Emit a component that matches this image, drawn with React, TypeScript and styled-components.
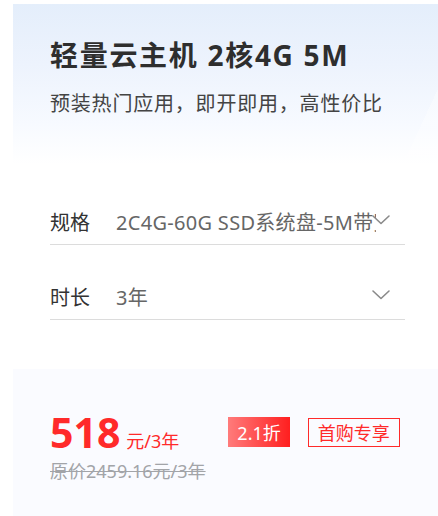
import React from "react";
import styled, { createGlobalStyle } from "styled-components";

interface SpecRow {
  label: string;
  value: string;
}

const rows: SpecRow[] = [
  { label: "规格", value: "2C4G-60G SSD系统盘-5M带宽-1200GB流量" },
  { label: "时长", value: "3年" },
];

const GlobalStyle = createGlobalStyle`
  html, body {
    margin: 0;
    padding: 0;
    background: #fff;
  }
  body {
    font-family: "Noto Sans", "Noto Sans CJK SC", sans-serif;
  }
`;

const Chevron = () => (
  <svg width="20" height="12" viewBox="0 0 20 12" fill="none">
    <path d="M2 2 L10 9.5 L18 2" stroke="#8a8a8a" strokeWidth="1.6" strokeLinecap="round" strokeLinejoin="round" />
  </svg>
);

const App: React.FC = () => {
  return (
    <>
      <GlobalStyle />
      <Card>
        <Header>
          <Title>轻量云主机 2核4G 5M</Title>
          <Subtitle>预装热门应用，即开即用，高性价比</Subtitle>
        </Header>

        <Form>
          {rows.map((row) => (
            <Row key={row.label}>
              <Label>{row.label}</Label>
              <Value>{row.value}</Value>
              <Arrow>
                <Chevron />
              </Arrow>
            </Row>
          ))}
        </Form>

        <PriceBox>
          <PriceLine>
            <Amount>
              <Big>518</Big>
              <Unit>元/3年</Unit>
            </Amount>
            <Discount>2.1折</Discount>
            <Tag>首购专享</Tag>
          </PriceLine>
          <Original>原价2459.16元/3年</Original>
        </PriceBox>
      </Card>
    </>
  );
};

const Card = styled.div`
  margin: 4px 0 0 13px;
  height: 512px;
  display: flex;
  flex-direction: column;
  background:
    linear-gradient(115deg, transparent 0 70%, rgba(255, 255, 255, 0.35) 70% 100%),
    linear-gradient(180deg, #e4eefb 0px, #edf3fd 60px, #f7faff 120px, #fff 160px);
  overflow: hidden;
`;

const Header = styled.div`
  padding: 34px 0 0 37px;
`;

const Title = styled.h1`
  margin: 0;
  font-size: 28px;
  line-height: 34px;
  font-weight: 700;
  color: #2e2e2e;
  letter-spacing: 1.7px;
`;

const Subtitle = styled.p`
  margin: 18px 0 0;
  font-size: 20px;
  line-height: 28px;
  color: #444;
  letter-spacing: 0.8px;
`;

const Form = styled.div`
  margin-top: 80px;
  padding: 0 33px 0 37px;
  display: flex;
  flex-direction: column;
  gap: 28px;
`;

const Row = styled.div`
  height: 46px;
  display: flex;
  align-items: center;
  border-bottom: 1px solid #dcdcdc;
`;

const Label = styled.span`
  width: 66px;
  flex-shrink: 0;
  font-size: 20px;
  color: #333;
`;

const Value = styled.span`
  flex: 1;
  min-width: 0;
  overflow: hidden;
  white-space: nowrap;
  font-size: 20px;
  letter-spacing: 0.3px;
  color: #666;
`;

const Arrow = styled.span`
  width: 34px;
  margin-left: -5px;
  flex-shrink: 0;
  display: flex;
  margin-top: -2px;
`;

const PriceBox = styled.div`
  margin-top: 49px;
  flex: 1;
  background: #fafbff;
  padding: 40px 0 0 37px;
`;

const PriceLine = styled.div`
  display: flex;
  align-items: center;
`;

const Amount = styled.div`
  display: flex;
  align-items: baseline;
  gap: 6px;
`;

const Big = styled.span`
  font-size: 41px;
  line-height: 46px;
  font-weight: 700;
  color: #ff2a2a;
`;

const Unit = styled.span`
  font-size: 18px;
  color: #ff2a2a;
`;

const Discount = styled.span`
  margin-left: 49px;
  height: 30px;
  padding: 0 9px;
  display: flex;
  align-items: center;
  font-size: 18px;
  color: #fff;
  background: linear-gradient(90deg, #ff7b7b, #ff1f1f);
`;

const Tag = styled.span`
  margin-left: 18px;
  height: 27px;
  padding: 0 9px;
  display: flex;
  align-items: center;
  font-size: 18px;
  color: #ff2a2a;
  border: 1px solid #ff2a2a;
`;

const Original = styled.div`
  margin-top: 2px;
  font-size: 18px;
  color: #a2a4a8;
  text-decoration: line-through;
`;

export default App;
